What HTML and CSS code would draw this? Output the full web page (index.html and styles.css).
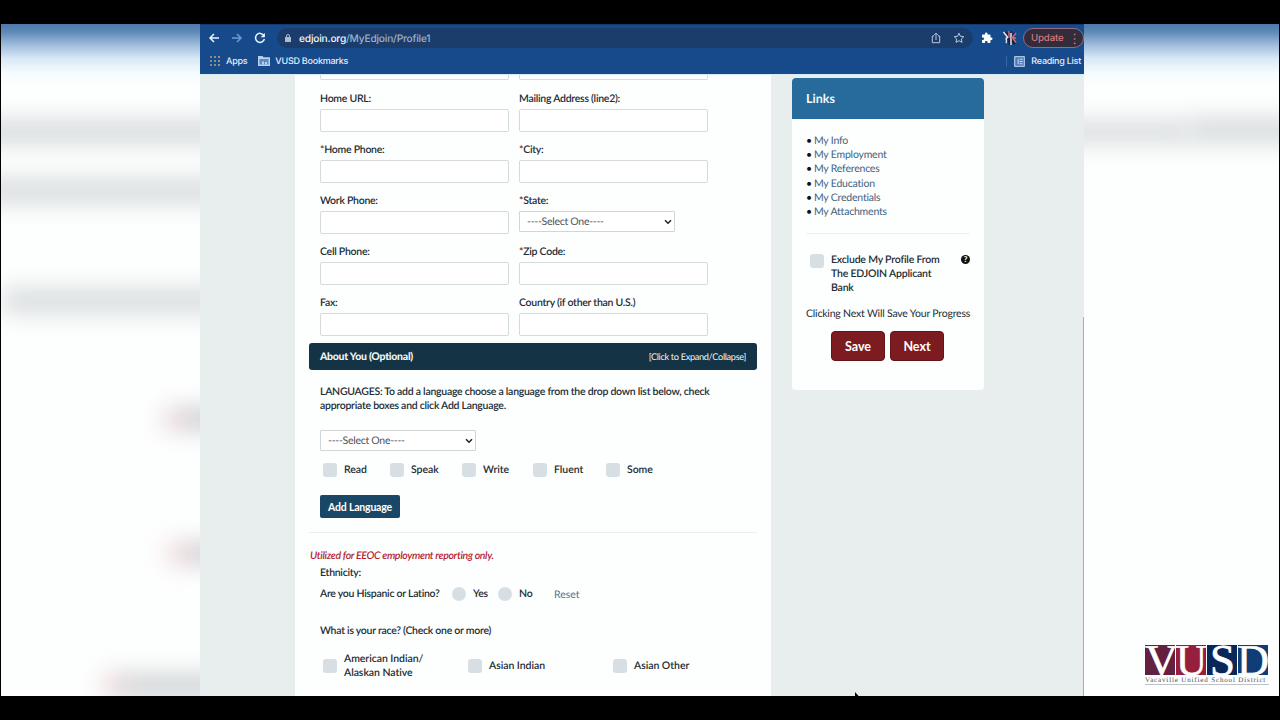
FILE: index.html
```html
<!DOCTYPE html>
<html lang="en">
<head>
  <meta charset="UTF-8">
  <meta name="viewport" content="width=device-width, initial-scale=1.0">
  <title>EDJOIN Profile</title>
  <link rel="stylesheet" href="styles.css">
</head>
<body>

  <div class="stage">

    <div class="side side-left">
      <i class="smudge s1"></i>
      <i class="smudge s2"></i>
      <i class="smudge s3"></i>
      <i class="smudge s4"></i>
      <i class="smudge s5"></i>
      <i class="smudge s6"></i>
    </div>

    <div class="browser">
      <div class="chrome">
        <div class="toolbar">
          <svg class="nav" viewBox="0 0 12 12"><path d="M11 6H2M6 2L2 6l4 4"/></svg>
          <svg class="nav dim" viewBox="0 0 12 12"><path d="M1 6h9M6 2l4 4-4 4"/></svg>
          <svg class="nav" viewBox="0 0 12 12"><path d="M9.8 3.4A4.5 4.5 0 1 0 10.4 7"/><path class="solid" d="M10.9 1v4.3H6.6z"/></svg>
          <div class="address">
            <svg class="lock" viewBox="0 0 8 10"><path d="M2.500 5V3a1.500 1.500 0 0 1 3 0v2"/><rect x="1" y="4" width="6" height="5" rx=".6"/></svg>
            <span class="url"><b>edjoin.org</b>/MyEdjoin/Profile1</span>
            <svg class="share" viewBox="0 0 12 12"><path d="M4 4H2.3v6.7h7.4V4H8M6 8V1.4M4 3.2l2-2 2 2"/></svg>
            <svg class="star" viewBox="0 0 12 12"><path d="M6 1.2l1.4 3.1 3.4.4-2.5 2.3.7 3.4-3-1.7-3 1.7.7-3.4L1.2 4.7l3.4-.4z"/></svg>
          </div>
          <svg class="puzzle" viewBox="0 0 24 24"><path d="M20.5 11H19V7a2 2 0 0 0-2-2h-4V3.500a2.500 2.500 0 0 0-5 0V5H4a2 2 0 0 0-2 2v3.800h1.500a2.700 2.700 0 0 1 0 5.400H2V20a2 2 0 0 0 2 2h3.800v-1.500a2.700 2.700 0 0 1 5.400 0V22H17a2 2 0 0 0 2-2v-4h1.500a2.500 2.500 0 0 0 0-5z"/></svg>
          <svg class="avatar" viewBox="0 0 16 16"><path class="dk" d="M3 2l10 12M8 1v14M13 3L4 12"/><path class="wh" d="M1.500 2l4 5M6 7.500c-4 .5 0 3-2 5.500M9 3v12"/><path class="rd" d="M7 1v7M10 8l4-5M9 8h5M11 8.500l3 4"/></svg>
          <div class="update">Update<span class="dots">⋮</span></div>
        </div>
        <div class="bookmarks">
          <span class="apps-grid"><i></i><i></i><i></i><i></i><i></i><i></i><i></i><i></i><i></i></span>
          <span>Apps</span>
          <svg class="folder" viewBox="0 0 12 10"><path d="M0 0h4.500l1 1.200H12V10H0z"/><path class="face" d="M1.500 3h9v5.500h-9z"/><path d="M4 5.500h2v3H4zM7 6h2v2.500H7z"/></svg>
          <span>VUSD Bookmarks</span>
          <div class="reading">
            <svg viewBox="0 0 12 12"><rect x=".8" y=".8" width="10.400" height="10.400"/><path d="M4.500 3v6M6 3.500h3.500M6 6h3.500M6 8.500h3.500"/></svg>
            <span>Reading List</span>
          </div>
        </div>
      </div>

      <div class="page">
        <main class="panel">
          <div class="fields">
            <div class="field first"><span class="box"></span></div>
            <div class="field first"><span class="box"></span></div>
            <div class="field"><label>Home URL:</label><span class="box"></span></div>
            <div class="field"><label>Mailing Address (line2):</label><span class="box"></span></div>
            <div class="field"><label><em>*</em>Home Phone:</label><span class="box"></span></div>
            <div class="field"><label><em>*</em>City:</label><span class="box"></span></div>
            <div class="field"><label>Work Phone:</label><span class="box"></span></div>
            <div class="field"><label><em>*</em>State:</label>
              <div class="select">----Select One----<svg viewBox="0 0 8 6"><path d="M1 1.200l3 3 3-3"/></svg></div>
            </div>
            <div class="field"><label>Cell Phone:</label><span class="box"></span></div>
            <div class="field"><label><em>*</em>Zip Code:</label><span class="box"></span></div>
            <div class="field"><label>Fax:</label><span class="box"></span></div>
            <div class="field"><label>Country (if other than U.S.)</label><span class="box"></span></div>
          </div>

          <div class="section-bar"><b>About You (Optional)</b><span>[Click to Expand/Collapse]</span></div>

          <div class="about">
            <p class="hint">LANGUAGES: To add a language choose a language from the drop down list below, check<br>appropriate boxes and click Add Language.</p>
            <div class="select">----Select One----<svg viewBox="0 0 8 6"><path d="M1 1.200l3 3 3-3"/></svg></div>
            <div class="checks">
              <span class="check read"><i></i>Read</span>
              <span class="check speak"><i></i>Speak</span>
              <span class="check write"><i></i>Write</span>
              <span class="check fluent"><i></i>Fluent</span>
              <span class="check"><i></i>Some</span>
            </div>
            <button class="add">Add Language</button>
          </div>

          <div class="eeoc">Utilized for EEOC employment reporting only.</div>
          <div class="ethnicity">
            <div class="eth-title">Ethnicity:</div>
            <div class="latino">
              <span class="question">Are you Hispanic or Latino?</span>
              <span class="radio"><i></i>Yes</span>
              <span class="radio"><i></i>No</span>
              <a class="reset">Reset</a>
            </div>
            <div class="race-title">What is your race? (Check one or more)</div>
            <div class="races">
              <span class="check"><i></i><span>American Indian/<br>Alaskan Native</span></span>
              <span class="check"><i></i>Asian Indian</span>
              <span class="check"><i></i>Asian Other</span>
            </div>
          </div>
        </main>

        <aside class="links">
          <h3>Links</h3>
          <div class="links-body">
            <ul>
              <li><a>My Info</a></li>
              <li><a>My Employment</a></li>
              <li><a>My References</a></li>
              <li><a>My Education</a></li>
              <li><a>My Credentials</a></li>
              <li><a>My Attachments</a></li>
            </ul>
            <div class="exclude">
              <i></i>
              <span>Exclude My Profile From<br>The EDJOIN Applicant<br>Bank</span>
              <b class="help">?</b>
            </div>
            <p class="note">Clicking Next Will Save Your Progress</p>
            <div class="actions">
              <button>Save</button>
              <button>Next</button>
            </div>
          </div>
        </aside>
        <span class="scroll"></span>
      </div>
    </div>

    <div class="side side-right">
      <i class="smudge s7"></i>
      <i class="smudge s8"></i>
      <div class="logo">
        <svg viewBox="0 0 124 32">
          <rect x="0" y="1" width="30" height="30" fill="#64213f"/>
          <rect x="31" y="1" width="30" height="30" fill="#961f3e"/>
          <rect x="62" y="1" width="30" height="30" fill="#0b2758"/>
          <rect x="93" y="1" width="30" height="30" fill="#103d75"/>
          <g class="letters">
            <text x="0" y="31" textLength="33" lengthAdjust="spacingAndGlyphs">V</text>
            <text x="31" y="31" textLength="31" lengthAdjust="spacingAndGlyphs">U</text>
            <text x="65" y="31" textLength="25" lengthAdjust="spacingAndGlyphs">S</text>
            <text x="92" y="31" textLength="32" lengthAdjust="spacingAndGlyphs">D</text>
          </g>
        </svg>
        <div class="logo-name">Vacaville Unified School District</div>
      </div>
    </div>

    <svg class="cursor" viewBox="0 0 6 5"><path d="M1 0l4 4.500H1z"/></svg>
  </div>

</body>
</html>
```
FILE: styles.css
```css
* {
  box-sizing: border-box;
}
body {
  margin: 0;
  background: #000;
  font-family: Lato, "Liberation Sans", sans-serif;
  font-size: 10.500px;
  color: #222d35;
  text-rendering: geometricPrecision;
}
.stage {
  position: relative;
  display: flex;
  width: 1280px;
  height: 720px;
  padding: 24px 1px;
  overflow: hidden;
}

/* blurred margins */
.side {
  position: relative;
  overflow: hidden;
  background: linear-gradient(#4b7aab 0, #5f8ab8 8px, #9bb9d9 20px, #d7e7f5 34px, #f6fcff 49px, #fdfefe 64px);
}
.side-left {
  width: 199px;
}
.side-right {
  flex: 1;
}
.smudge {
  position: absolute;
  background: #cfd4d6;
  filter: blur(12px);
}
.s1 {
  left: -40px;
  top: 98px;
  width: 290px;
  height: 20px;
}
.s2 {
  left: -40px;
  top: 157px;
  width: 290px;
  height: 20px;
}
.s3 {
  left: 2px;
  top: 267px;
  width: 240px;
  height: 20px;
}
.s4 {
  left: 164px;
  top: 386px;
  width: 70px;
  height: 18px;
  background: linear-gradient(90deg, #edcdd0, #bcc3c8 50%);
}
.s5 {
  left: 168px;
  top: 521px;
  width: 70px;
  height: 17px;
  background: linear-gradient(90deg, #f4cbcc, #bcc3c8 50%);
}
.s6 {
  left: 104px;
  top: 652px;
  width: 130px;
  height: 20px;
  background: linear-gradient(90deg, #efcccd, #c6cbce 25%);
}
.s7 {
  left: -40px;
  top: 99px;
  width: 145px;
  height: 18px;
}
.s8 {
  left: 105px;
  top: 96px;
  width: 140px;
  height: 21px;
}

/* browser chrome */
.browser {
  display: flex;
  flex-direction: column;
  width: 884px;
}
.chrome {
  height: 50px;
  background: #174a8b;
  border-top: 1px solid #123a70;
  color: #e4eefb;
  font: 500 9px Inter, "Liberation Sans", sans-serif;
  letter-spacing: -0.25px;
}
.toolbar {
  display: flex;
  align-items: center;
  height: 26px;
  padding-left: 8px;
}
.nav {
  width: 12px;
  height: 12px;
  margin-right: 11px;
  fill: none;
  stroke: #eaf4ff;
  stroke-width: 1.500;
}
.nav .solid {
  fill: #eaf4ff;
  stroke: none;
}
.nav.dim {
  stroke: #6f9bd0;
}
.address {
  display: flex;
  align-items: center;
  width: 696px;
  height: 20px;
  padding: 0 8px 0 7px;
  border-radius: 10px;
  background: #1b3d6b;
}
.lock {
  width: 8px;
  height: 10px;
  margin-right: 7px;
  fill: #aebbcc;
}
.lock path {
  fill: none;
  stroke: #aebbcc;
}
.url {
  flex: 1;
  padding-top: 1px;
  font-size: 10.200px;
  letter-spacing: -0.2px;
  color: #9db3d0;
}
.url b {
  font-weight: 500;
  color: #f2f7ff;
}
.share, .star {
  width: 12px;
  height: 12px;
  fill: none;
  stroke: #b5c8df;
}
.star {
  margin-left: 11px;
}
.puzzle {
  width: 12px;
  height: 12px;
  margin-left: 8px;
  fill: #fff;
}
.avatar {
  width: 16px;
  height: 16px;
  margin-left: 9px;
  fill: none;
  stroke-width: 1.500;
}
.dk {
  stroke: #16233c;
  stroke-width: 3;
}
.wh {
  stroke: #e8e8f0;
}
.rd {
  stroke: #d8647a;
}
.update {
  display: flex;
  align-items: center;
  justify-content: space-between;
  width: 61px;
  height: 20px;
  margin-left: 5px;
  padding: 1px 2px 0 7px;
  border: 1px solid #9a6a7c;
  border-radius: 10px;
  background: #322c3c;
  color: #d9787b;
  font-size: 9.600px;
  letter-spacing: -0.1px;
}
.dots {
  font-size: 13px;
}
.bookmarks {
  display: flex;
  align-items: center;
  height: 20px;
  padding: 0 3px 0 10px;
}
.apps-grid {
  display: grid;
  grid-template-columns: repeat(3, 2px);
  gap: 2px;
  margin-right: 6px;
}
.apps-grid i {
  height: 2px;
  background: #9a7d8f;
}
.apps-grid i:nth-child(3n) {
  background: #b08a72;
}
.apps-grid i:nth-child(3n+2) {
  background: #6f9a95;
}
.folder {
  width: 12px;
  height: 10px;
  margin: 0 5px 0 11px;
  fill: #b6d0ee;
}
.folder .face {
  fill: #5d88be;
}
.reading {
  display: flex;
  align-items: center;
  gap: 6px;
  height: 11px;
  margin-left: auto;
  padding-left: 7px;
  border-left: 1px solid #3a659f;
}
.reading svg {
  width: 11px;
  height: 11px;
  fill: #4b77b2;
  stroke: #dceaff;
}

/* page */
.page {
  position: relative;
  display: flex;
  align-items: flex-start;
  flex: 1;
  padding-left: 95px;
  overflow: hidden;
  background: #e8eeee;
  border-top: 1px solid #d3ecfa;
}
.panel {
  width: 476px;
  height: 640px;
  background: #fdfefe;
  font-weight: 600;
  letter-spacing: -0.27px;
}
.fields {
  display: grid;
  grid-template-columns: 189px 189px;
  column-gap: 10px;
  padding-left: 25px;
}
.field {
  height: 51px;
}
.field.first {
  height: 17px;
}
.field.first .box {
  height: 5px;
  border-top: 0;
  border-radius: 0 0 2px 2px;
}
.field label {
  display: block;
  height: 17px;
  line-height: 15px;
}
.field em {
  color: #8d1c22;
  font-style: normal;
}
.box {
  display: block;
  height: 23px;
  border: 1px solid #d5dadb;
  border-radius: 2px;
  background: #fff;
}
.select {
  display: flex;
  align-items: center;
  justify-content: space-between;
  width: 156px;
  height: 21px;
  padding: 1px 2px 0 7px;
  border: 1px solid #cfd5d9;
  border-radius: 1px;
  background: #fff;
  color: #4c5358;
  font-weight: 400;
}
.select svg {
  width: 8px;
  height: 6px;
  fill: none;
  stroke: #222;
  stroke-width: 1.500;
}
.section-bar {
  display: flex;
  align-items: center;
  justify-content: space-between;
  width: 448px;
  height: 27px;
  margin: -4px 0 0 14px;
  padding: 0 11px;
  border-radius: 3px;
  background: #143345;
  color: #eef5f8;
}
.section-bar span {
  font-size: 9.200px;
  font-weight: 400;
  letter-spacing: -0.33px;
}
.about {
  height: 163px;
  margin: 0 14px;
  padding: 15px 11px 0;
  border-bottom: 1px solid #ebeeef;
}
.hint {
  margin: 0 0 17px;
  line-height: 14px;
  white-space: nowrap;
}
.checks {
  display: flex;
  height: 14px;
  margin: 12px 0 18px 3px;
}
.check {
  display: flex;
  align-items: center;
  letter-spacing: -0.05px;
}
.check i, .exclude i, .radio i {
  flex: none;
  width: 14px;
  height: 14px;
  margin-right: 7px;
  border-radius: 3px;
  background: #d7dfe5;
}
.read {
  width: 67px;
}
.speak {
  width: 72px;
}
.write {
  width: 71px;
}
.fluent {
  width: 73px;
}
.add {
  display: block;
  width: 80px;
  height: 23px;
  padding: 0;
  border: 0;
  border-radius: 2px;
  background: #1b4767;
  color: #fff;
  font: 700 10.500px Lato, sans-serif;
  letter-spacing: -0.2px;
}
.eeoc {
  margin: 16px 0 0 15px;
  line-height: 14px;
  color: #b51f32;
  font-style: italic;
  letter-spacing: -0.34px;
}
.ethnicity {
  padding: 4px 0 0 25px;
}
.eth-title {
  line-height: 13px;
}
.latino {
  display: flex;
  align-items: center;
  height: 15px;
  margin-top: 6px;
}
.question {
  width: 132px;
}
.radio {
  display: flex;
  align-items: center;
  width: 46px;
}
.radio i {
  border-radius: 50%;
}
.reset {
  margin: 2px 0 0 10px;
  color: #4c7698;
  font-weight: 400;
  letter-spacing: 0;
}
.race-title {
  margin-top: 23px;
  line-height: 14px;
}
.races {
  display: grid;
  grid-template-columns: 145px 145px 120px;
  margin: 14px 0 0 3px;
  line-height: 14px;
}

/* links card */
.links {
  width: 192px;
  height: 312px;
  margin: 3px 0 0 21px;
  border-radius: 4px;
  overflow: hidden;
  background: #fdfefe;
}
.links h3 {
  height: 41px;
  margin: 0;
  padding-left: 14px;
  background: #266b9b;
  color: #f2faff;
  font-size: 12.500px;
  line-height: 41px;
}
.links-body {
  padding: 15px 14px 0;
  letter-spacing: -0.2px;
}
.links ul {
  height: 100px;
  margin: 0;
  padding: 0;
  border-bottom: 1px solid #eef0f1;
  list-style: none;
  line-height: 14.200px;
}
.links li::before {
  content: "•";
  margin-right: 2px;
  color: #111;
}
.links a {
  color: #44637d;
}
.exclude {
  display: flex;
  height: 43px;
  margin-top: 19px;
  padding-left: 4px;
  font-weight: 600;
  line-height: 14.200px;
  white-space: nowrap;
}
.exclude span {
  flex: 1;
}
.exclude i {
  margin-top: 1px;
}
.help {
  width: 9px;
  height: 9px;
  margin: 2px 0 0;
  border-radius: 50%;
  background: #111;
  color: #fff;
  font-size: 8px;
  line-height: 9px;
  text-align: center;
}
.note {
  margin: 11px 0 10px;
  line-height: 14px;
  white-space: nowrap;
}
.actions {
  display: flex;
  gap: 5px;
  margin-left: 25px;
}
.actions button {
  width: 54px;
  height: 30px;
  padding: 0;
  border: 1px solid #611517;
  border-radius: 4px;
  background: #7d1c20;
  color: #fff;
  font: 700 12.500px Lato, sans-serif;
}
.scroll {
  position: absolute;
  right: 0;
  top: 242px;
  width: 1px;
  bottom: 0;
  background: #a9adb0;
}

/* district logo */
.logo {
  position: absolute;
  left: 61px;
  top: 620px;
  width: 124px;
}
.logo svg {
  display: block;
  width: 124px;
  height: 32px;
  overflow: visible;
}
.letters {
  fill: #fff;
  stroke: #fff;
  stroke-width: 0.6;
  font: 44px "Liberation Serif", serif;
}
.logo-name {
  border-bottom: 1px solid #bfc3c8;
  color: #4a4f5a;
  font: 7px/8px "Liberation Serif", serif;
  letter-spacing: 0.85px;
  white-space: nowrap;
}
.cursor {
  position: absolute;
  left: 854px;
  top: 692px;
  width: 6px;
  height: 5px;
}
```
